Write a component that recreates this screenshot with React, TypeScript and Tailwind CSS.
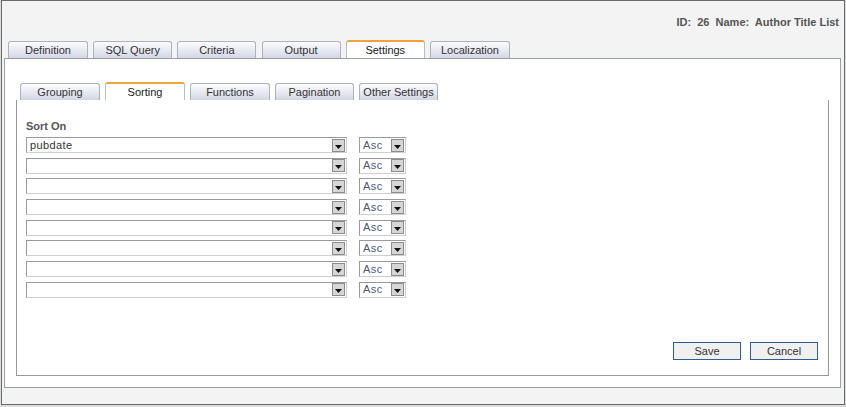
import React from "react";

const font = { fontFamily: '"Liberation Sans", Arial, sans-serif' };

function Tab({ label, active, w = "w-[79px]" }: { label: string; active?: boolean; w?: string }) {
  if (active) {
    return (
      <div
        className={`${w} h-[18px] rounded-t-[3px] border-x border-t-2 border-x-[#b4bcc4] border-t-[#f2a23a] bg-white flex items-center justify-center text-[11px] text-[#1a1a1a] leading-none`}
      >
        {label}
      </div>
    );
  }
  return (
    <div
      className={`${w} h-[17px] rounded-t-[3px] border-x border-t border-[#aab3bb] bg-gradient-to-b from-[#fdfdfe] to-[#d3d6e6] flex items-center justify-center text-[11px] text-[#333] leading-none pt-[1px]`}
    >
      {label}
    </div>
  );
}

function Arrow() {
  return (
    <div className="w-[13px] h-[13px] bg-[#d6d6d6] border border-[#8c8c8c] flex items-end justify-center pb-[2px] shrink-0">
      <svg width="7" height="4" viewBox="0 0 7 4">
        <path d="M0 0h7L3.5 4z" fill="#111" />
      </svg>
    </div>
  );
}

function Select({ value, w, color = "#333" }: { value?: string; w: string; color?: string }) {
  return (
    <div
      className={`${w} h-[16px] bg-white border border-t-[#9a9a9a] border-l-[#9a9a9a] border-b-[#cfcfcf] border-r-[#cfcfcf] flex items-center justify-between pl-[3px] pr-[1px]`}
    >
      <span className="text-[11px] leading-none tracking-[0.4px]" style={{ color }}>
        {value ?? ""}
      </span>
      <Arrow />
    </div>
  );
}

export default function App() {
  const rows = ["pubdate", "", "", "", "", "", "", ""];
  return (
    <div className="w-[846px] h-[407px] bg-[#dcdcdc] overflow-hidden" style={font}>
      <div className="ml-[1px] w-[844px] h-[405px] border border-[#6a6a6a] bg-[#f3f3f3] flex flex-col">
        <div className="h-[39px] flex justify-end items-start pt-[15px] pr-[5px]">
          <span className="text-[11px] leading-[13px] font-bold text-[#555] whitespace-pre">
            {"ID:  26  Name:  Author Title List"}
          </span>
        </div>
        <div className="h-[18px] flex items-end gap-[5.2px] pl-[6px]">
          <Tab label="Definition" w="w-[80px]" />
          <Tab label="SQL Query" />
          <Tab label="Criteria" />
          <Tab label="Output" />
          <Tab label="Settings" active />
          <Tab label="Localization" w="w-[80px]" />
        </div>
        <div className="ml-[2px] w-[837px] h-[330px] border border-[#97a3a3] bg-white flex flex-col">
          <div className="mt-[23px] h-[18px] flex items-end gap-[5px] pl-[15px]">
            <Tab label="Grouping" w="w-[80px]" />
            <Tab label="Sorting" active w="w-[80px]" />
            <Tab label="Functions" w="w-[80px]" />
            <Tab label="Pagination" w="w-[79px]" />
            <Tab label="Other Settings" w="w-[79px]" />
          </div>
          <div className="ml-[11px] w-[813px] h-[276px] border-x border-b border-[#999] flex flex-col">
            <div className="pt-[20px] pl-[9px]">
              <div className="text-[11px] leading-[13px] font-bold text-[#555]">Sort On</div>
              <div className="mt-[4px] flex flex-col gap-[4.7px]">
                {rows.map((r, i) => (
                  <div key={i} className="flex items-center gap-[12px]">
                    <Select value={r} w="w-[321px]" />
                    <Select value="Asc" w="w-[47px]" color="#4b5878" />
                  </div>
                ))}
              </div>
            </div>
            <div className="mt-auto flex justify-end gap-[9px] pr-[10px] pb-[15px]">
              <button className="w-[68px] h-[18px] border border-[#2f5f8f] bg-[#f0f0f0] text-[11px] leading-none text-[#333]">
                Save
              </button>
              <button className="w-[68px] h-[18px] border border-[#2f5f8f] bg-[#f0f0f0] text-[11px] leading-none text-[#333]">
                Cancel
              </button>
            </div>
          </div>
        </div>
      </div>
    </div>
  );
}
